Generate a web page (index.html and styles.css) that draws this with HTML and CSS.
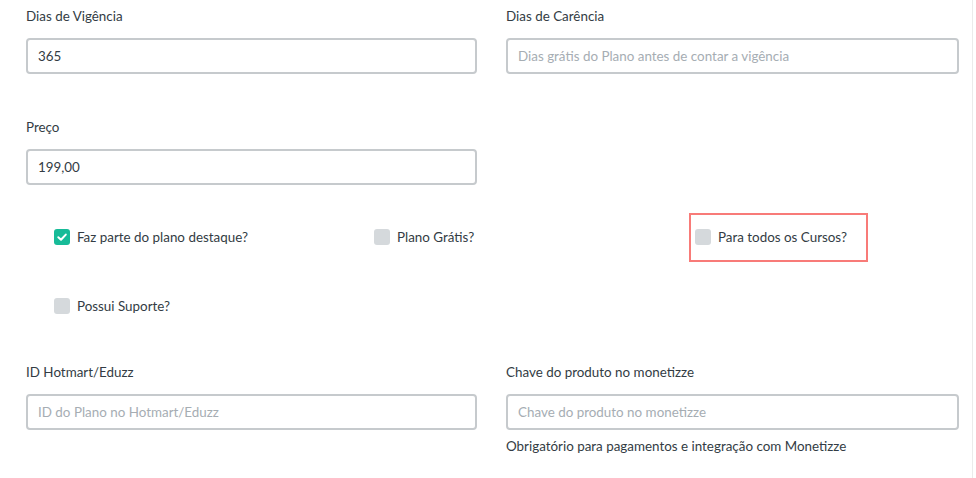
FILE: index.html
```html
<!DOCTYPE html>
<html lang="pt">
<head>
<meta charset="utf-8">
<link rel="stylesheet" href="styles.css">
</head>
<body>
<div class="page">
  <div class="row two">
    <div class="field">
      <label class="lbl">Dias de Vigência</label>
      <div class="input">365</div>
    </div>
    <div class="field">
      <label class="lbl">Dias de Carência</label>
      <div class="input ph">Dias grátis do Plano antes de contar a vigência</div>
    </div>
  </div>
  <div class="row two r2">
    <div class="field">
      <label class="lbl">Preço</label>
      <div class="input">199,00</div>
    </div>
  </div>
  <div class="row three checks1">
    <div class="cell"><span class="check on"><svg viewBox="0 0 16 16" width="16" height="16"><path d="M4.3 8.3 L7 10.8 L11.8 5.6" fill="none" stroke="#fff" stroke-width="2" stroke-linecap="round" stroke-linejoin="round"/></svg></span><span class="ctext">Faz parte do plano destaque?</span></div>
    <div class="cell"><span class="check"></span><span class="ctext">Plano Grátis?</span></div>
    <div class="cell"><div class="hl"><span class="check"></span><span class="ctext">Para todos os Cursos?</span></div></div>
  </div>
  <div class="row three checks2">
    <div class="cell"><span class="check"></span><span class="ctext">Possui Suporte?</span></div>
  </div>
  <div class="row two r4">
    <div class="field">
      <label class="lbl">ID Hotmart/Eduzz</label>
      <div class="input ph">ID do Plano no Hotmart/Eduzz</div>
    </div>
    <div class="field">
      <label class="lbl">Chave do produto no monetizze</label>
      <div class="input ph">Chave do produto no monetizze</div>
      <p class="help">Obrigatório para pagamentos e integração com Monetizze</p>
    </div>
  </div>
</div>
</body>
</html>
```
FILE: styles.css
```css
html, body {
  margin: 0;
  padding: 0;
  background: #fff;
}
body {
  font-family: Lato, "Open Sans", sans-serif;
  font-size: 13.4px;
  color: #333c44;
  width: 976px;
  height: 478px;
  overflow: hidden;
}
.page {
  width: 961px;
  height: 478px;
  padding-left: 11px;
  border-right: 1px solid #ebebeb;
  box-sizing: content-box;
}
.row {
  display: grid;
}
.two {
  padding-left: 15px;
  grid-template-columns: 451px 453px;
  column-gap: 29px;
}
.three {
  grid-template-columns: 320px 321px 321px;
}
.field {
  display: flex;
  flex-direction: column;
}
.lbl {
  display: block;
  line-height: 20px;
  padding-top: 6px;
  margin-bottom: 12px;
}
.input {
  height: 36px;
  box-sizing: border-box;
  border: 2px solid #c6cacd;
  border-radius: 4px;
  padding: 0 10px;
  line-height: 32px;
  color: #333c44;
}
.input.ph {
  color: #a6adb3;
}
.r2 {
  margin-top: 37px;
}
.checks1 {
  margin-top: 27px;
  height: 50px;
  align-items: center;
}
.cell {
  padding-left: 43px;
  display: flex;
  align-items: center;
}
.hl {
  display: flex;
  align-items: center;
  margin-left: -6px;
  padding-left: 4px;
  width: 171px;
  height: 45px;
  border: 2px solid #f87b78;
}
.check {
  width: 16px;
  height: 16px;
  border-radius: 3px;
  background: #d5d9dc;
  flex: none;
  display: flex;
}
.check.on {
  background: #17bb98;
}
.ctext {
  margin-left: 7px;
  line-height: 20px;
}
.checks2 {
  margin-top: 34px;
}
.r4 {
  margin-top: 40px;
}
.help {
  margin: 6px 0 0;
  line-height: 20px;
}
```
